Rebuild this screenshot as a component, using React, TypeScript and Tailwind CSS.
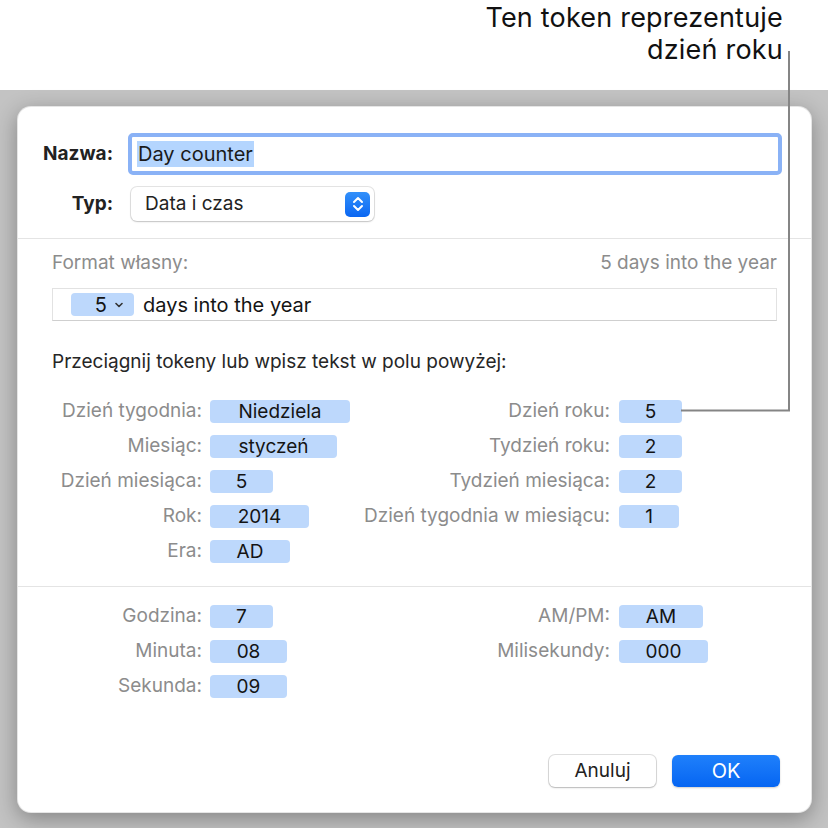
import React from 'react'

type Field = { label: string; value: string; width: number }

const font = { fontFamily: 'Inter, "Noto Sans", sans-serif' }

const dateLeft: Field[] = [
  { label: 'Dzień tygodnia:', value: 'Niedziela', width: 140 },
  { label: 'Miesiąc:', value: 'styczeń', width: 127 },
  { label: 'Dzień miesiąca:', value: '5', width: 63 },
  { label: 'Rok:', value: '2014', width: 99 },
  { label: 'Era:', value: 'AD', width: 80 },
]

const dateRight: Field[] = [
  { label: 'Dzień roku:', value: '5', width: 63 },
  { label: 'Tydzień roku:', value: '2', width: 63 },
  { label: 'Tydzień miesiąca:', value: '2', width: 63 },
  { label: 'Dzień tygodnia w miesiącu:', value: '1', width: 60 },
]

const timeLeft: Field[] = [
  { label: 'Godzina:', value: '7', width: 63 },
  { label: 'Minuta:', value: '08', width: 77 },
  { label: 'Sekunda:', value: '09', width: 77 },
]

const timeRight: Field[] = [
  { label: 'AM/PM:', value: 'AM', width: 84 },
  { label: 'Milisekundy:', value: '000', width: 89 },
]

function Token({ value, width }: { value: string; width: number }) {
  return (
    <span
      className="flex h-[23px] items-center justify-center rounded-[4px] bg-[#bdd8fc] text-[19px] leading-none text-[#141414]"
      style={{ width }}
    >
      {value}
    </span>
  )
}

function TokenGrid({ left, right }: { left: Field[]; right: Field[] }) {
  const rows = Math.max(left.length, right.length)
  const cells = []
  for (let i = 0; i < rows; i++) {
    const l = left[i]
    const r = right[i]
    cells.push(
      <React.Fragment key={i}>
        <span className="flex justify-end text-[19px] text-[#8c8c8c]">{l ? l.label : ''}</span>
        <span className="pl-2">{l && <Token value={l.value} width={l.width} />}</span>
        <span className="flex justify-end text-[19px] text-[#8c8c8c]">{r ? r.label : ''}</span>
        <span className="pl-[9px]">{r && <Token value={r.value} width={r.width} />}</span>
      </React.Fragment>
    )
  }
  return (
    <div className="grid grid-cols-[184px_208px_200px_1fr] auto-rows-[35px] items-center whitespace-nowrap">
      {cells}
    </div>
  )
}

export default function App() {
  return (
    <div className="relative h-[828px] w-[828px] overflow-hidden bg-white" style={font}>
      <div className="flex h-[90px] flex-col items-end pr-[45px] pt-[2px] text-[27px] leading-[32px] tracking-[0.2px] text-[#111]">
        <span>Ten token reprezentuje</span>
        <span>dzień roku</span>
      </div>

      <div className="h-[738px] bg-[#c3c3c3] pl-[17px] pt-[16px]">
        <div className="flex h-[707px] w-[795px] flex-col rounded-[14px] border border-black/10 bg-white shadow-[0_6px_22px_rgba(0,0,0,0.32)]">
          <div className="mt-[26px] flex items-center">
            <span className="w-[95px] text-right text-[19px] font-bold text-[#222]">Nazwa:</span>
            <div className="ml-[15px] flex h-[42px] w-[654px] items-center rounded-[5px] border-[4px] border-[#8ab2f6] bg-white pl-[5px]">
              <span className="bg-[#b4d5fe] px-[1px] text-[20px] leading-[26px] text-[#1a1a1a]">Day counter</span>
            </div>
          </div>

          <div className="mt-[12px] flex items-center">
            <span className="w-[95px] text-right text-[19px] font-bold text-[#222]">Typ:</span>
            <div className="ml-[18px] flex h-[34px] w-[243px] items-center justify-between rounded-[6px] bg-white pl-[14px] pr-[4px] shadow-[0_0_0_1px_rgba(0,0,0,0.1),0_1px_2px_rgba(0,0,0,0.15)]">
              <span className="text-[19px] text-[#222]">Data i czas</span>
              <span className="flex h-[25px] w-[25px] items-center justify-center rounded-[5px] bg-gradient-to-b from-[#3290fa] to-[#0a66f2]">
                <svg width="12" height="18" viewBox="0 0 12 18" fill="none" stroke="white" strokeWidth="2" strokeLinecap="round" strokeLinejoin="round">
                  <path d="M2 7 L6 3 L10 7" />
                  <path d="M2 11 L6 15 L10 11" />
                </svg>
              </span>
            </div>
          </div>

          <div className="mt-[17px] h-px bg-[#e4e4e4]" />

          <div className="px-[34px]">
            <div className="mt-[12px] flex h-[24px] items-center justify-between text-[19px] text-[#8c8c8c]">
              <span>Format własny:</span>
              <span>5 days into the year</span>
            </div>

            <div className="mt-[13px] flex h-[33px] items-center border border-[#e2e2e2] border-b-[#cfcfcf] pl-[18px]">
              <span className="flex h-[23px] w-[63px] items-center justify-end gap-[8px] rounded-[4px] bg-[#bdd8fc] pr-[11px] text-[20px] text-[#141414]">
                <span>5</span>
                <svg width="8" height="6" viewBox="0 0 8 6" fill="none" stroke="#333" strokeWidth="1.6" strokeLinecap="round" strokeLinejoin="round">
                  <path d="M1 1.5 L4 4.5 L7 1.5" />
                </svg>
              </span>
              <span className="ml-[9px] text-[20px] text-[#141414]">days into the year</span>
            </div>

            <div className="mt-[29px] flex h-[24px] items-center text-[19px] text-[#262626]">
              Przeciągnij tokeny lub wpisz tekst w polu powyżej:
            </div>
          </div>

          <div className="mt-[20px]">
            <TokenGrid left={dateLeft} right={dateRight} />
          </div>

          <div className="mt-[17px] h-px bg-[#e4e4e4]" />

          <div className="mt-[12px]">
            <TokenGrid left={timeLeft} right={timeRight} />
          </div>

          <div className="mt-[51px] flex justify-end gap-[16px] pr-[31px]">
            <button className="h-[32px] w-[107px] rounded-[6px] bg-white text-[19px] text-[#222] shadow-[0_0_0_1px_rgba(0,0,0,0.12),0_1px_2px_rgba(0,0,0,0.18)]">
              Anuluj
            </button>
            <button className="h-[32px] w-[108px] rounded-[6px] bg-gradient-to-b from-[#1f80fb] to-[#0565f2] text-[20px] text-white shadow-[0_1px_2px_rgba(0,0,0,0.2)]">
              OK
            </button>
          </div>
        </div>
      </div>

      <svg className="pointer-events-none absolute left-0 top-0" width="828" height="828">
        <path d="M789 51 V410.5 H681" fill="none" stroke="#858585" strokeWidth="2" />
      </svg>
    </div>
  )
}
